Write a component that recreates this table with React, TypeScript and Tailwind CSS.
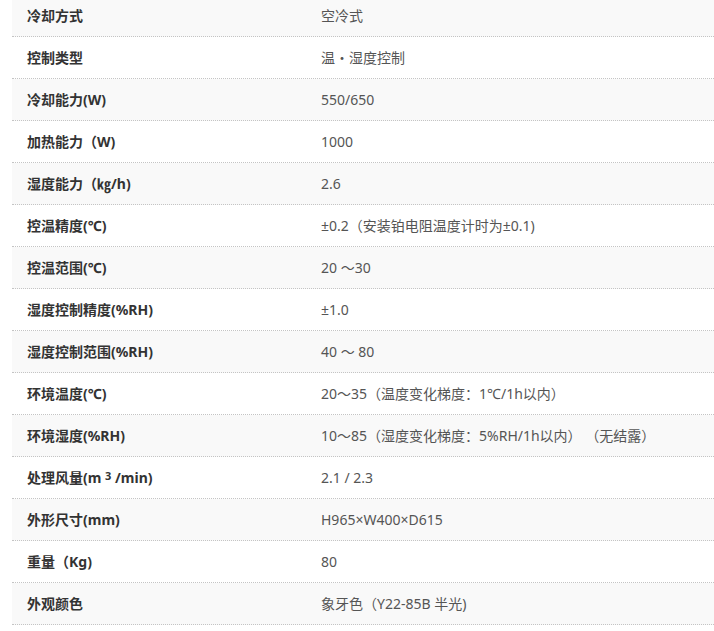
const rows: [React.ReactNode, string][] = [
  ["冷却方式", "空冷式"],
  ["控制类型", "温・湿度控制"],
  ["冷却能力(W)", "550/650"],
  ["加热能力（W)", "1000"],
  ["湿度能力（㎏/h)", "2.6"],
  ["控温精度(℃)", "±0.2（安装铂电阻温度计时为±0.1)"],
  ["控温范围(℃)", "20 ～30"],
  ["湿度控制精度(%RH)", "±1.0"],
  ["湿度控制范围(%RH)", "40 ～ 80"],
  ["环境温度(℃)", "20～35（温度变化梯度：1℃/1h以内）"],
  ["环境湿度(%RH)", "10～85（湿度变化梯度：5%RH/1h以内） （无结露）"],
  [
    <>
      处理风量(m <sup className="text-[11px] relative -top-[3px]">3</sup> /min)
    </>,
    "2.1 / 2.3",
  ],
  ["外形尺寸(mm)", "H965×W400×D615"],
  ["重量（Kg)", "80"],
  ["外观颜色", "象牙色（Y22-85B 半光)"],
];

export default function App() {
  return (
    <div
      className="bg-white w-[714px] h-[631px] overflow-hidden pl-3 text-[14px]"
      style={{ fontFamily: '"Noto Sans", "Noto Sans CJK SC", sans-serif' }}
    >
      <div className="-mt-[5px]">
        {rows.map(([label, value], i) => (
          <div
            key={i}
            className={`flex items-center h-[42px] border-b border-dotted border-[#c4c4c4] ${i % 2 === 0 ? "bg-[#f9f9f9]" : "bg-white"}`}
          >
            <div className="w-[294px] pl-[15px] font-bold text-[#333]">{label}</div>
            <div className="flex-1 pl-[15px] text-[#555] whitespace-pre">{value}</div>
          </div>
        ))}
      </div>
    </div>
  );
}
